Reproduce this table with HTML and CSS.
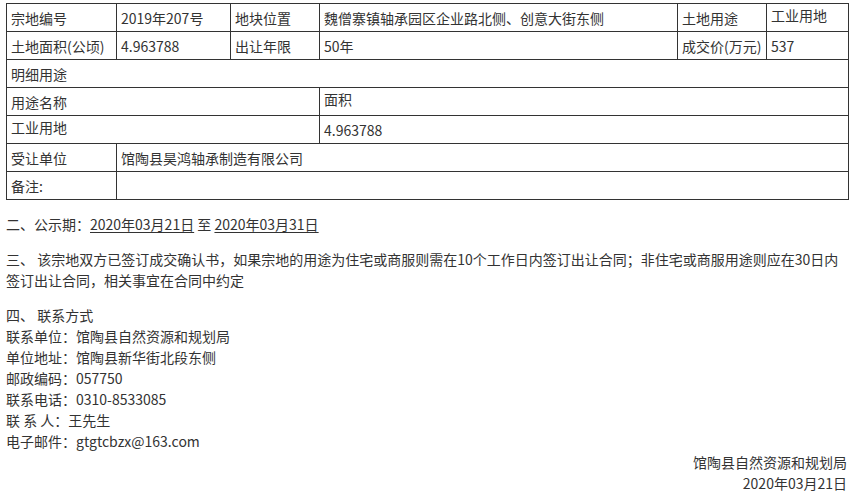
FILE: index.html
```html
<!DOCTYPE html>
<html lang="zh-CN">

<head>
  <meta charset="UTF-8">
  <meta name="viewport" content="width=device-width, initial-scale=1.0">
  <title>成交公示</title>
  <link rel="stylesheet" href="styles.css">
</head>

<body>
  <div class="notice">
    <table class="land-table">
      <colgroup>
        <col class="c1">
        <col class="c2">
        <col class="c3">
        <col class="c4">
        <col class="c5">
        <col class="c6">
      </colgroup>
      <tr>
        <td>宗地编号</td>
        <td>2019年207号</td>
        <td>地块位置</td>
        <td>魏僧寨镇轴承园区企业路北侧、创意大街东侧</td>
        <td>土地用途</td>
        <td class="top">工业用地</td>
      </tr>
      <tr>
        <td>土地面积(公顷)</td>
        <td>4.963788</td>
        <td>出让年限</td>
        <td>50年</td>
        <td>成交价(万元)</td>
        <td>537</td>
      </tr>
      <tr>
        <td colspan="6">明细用途</td>
      </tr>
      <tr>
        <td colspan="3">用途名称</td>
        <td colspan="3" class="top">面积</td>
      </tr>
      <tr>
        <td colspan="3" class="top">工业用地</td>
        <td colspan="3">4.963788</td>
      </tr>
      <tr>
        <td>受让单位</td>
        <td colspan="5">馆陶县昊鸿轴承制造有限公司</td>
      </tr>
      <tr>
        <td>备注:</td>
        <td colspan="5"></td>
      </tr>
    </table>

    <p>二、公示期：<u>2020年03月21日</u> 至 <u>2020年03月31日</u></p>

    <p>三、 该宗地双方已签订成交确认书，如果宗地的用途为住宅或商服则需在10个工作日内签订出让合同；非住宅或商服用途则应在30日内签订出让合同，相关事宜在合同中约定</p>

    <div class="contact">
      <div>四、 联系方式</div>
      <div>联系单位：馆陶县自然资源和规划局</div>
      <div>单位地址：馆陶县新华街北段东侧</div>
      <div>邮政编码：057750</div>
      <div>联系电话：0310-8533085</div>
      <div>联 系 人：王先生</div>
      <div>电子邮件：gtgtcbzx@163.com</div>
      <div class="sign">馆陶县自然资源和规划局</div>
      <div class="sign">2020年03月21日</div>
    </div>
  </div>
</body>

</html>
```

FILE: styles.css
```css
body {
  margin: 0;
  padding: 3px 8px 0 6px;
  font-family: "Noto Sans CJK SC", "Noto Sans", sans-serif;
  font-size: 14px;
  line-height: 21px;
  color: #333;
  background: white;
}

.land-table {
  width: 100%;
  border-collapse: collapse;
  table-layout: fixed;
}

.c1 { width: 110px; }
.c2 { width: 114px; }
.c3 { width: 89px; }
.c4 { width: 358px; }
.c5 { width: 89px; }
.c6 { width: 82px; }

.land-table tr {
  height: 28px;
}

.land-table td {
  border: 1px solid #333;
  padding: 0 4px;
  line-height: 18px;
  vertical-align: middle;
  white-space: nowrap;
  overflow: hidden;
}

.land-table td.top {
  vertical-align: top;
  padding-top: 2px;
}

p {
  margin: 14px 0;
}

u {
  text-decoration-thickness: 1px;
  text-underline-offset: 2px;
}

.contact {
  margin-top: 12px;
}

.sign {
  text-align: right;
  padding-right: 1px;
}
```
